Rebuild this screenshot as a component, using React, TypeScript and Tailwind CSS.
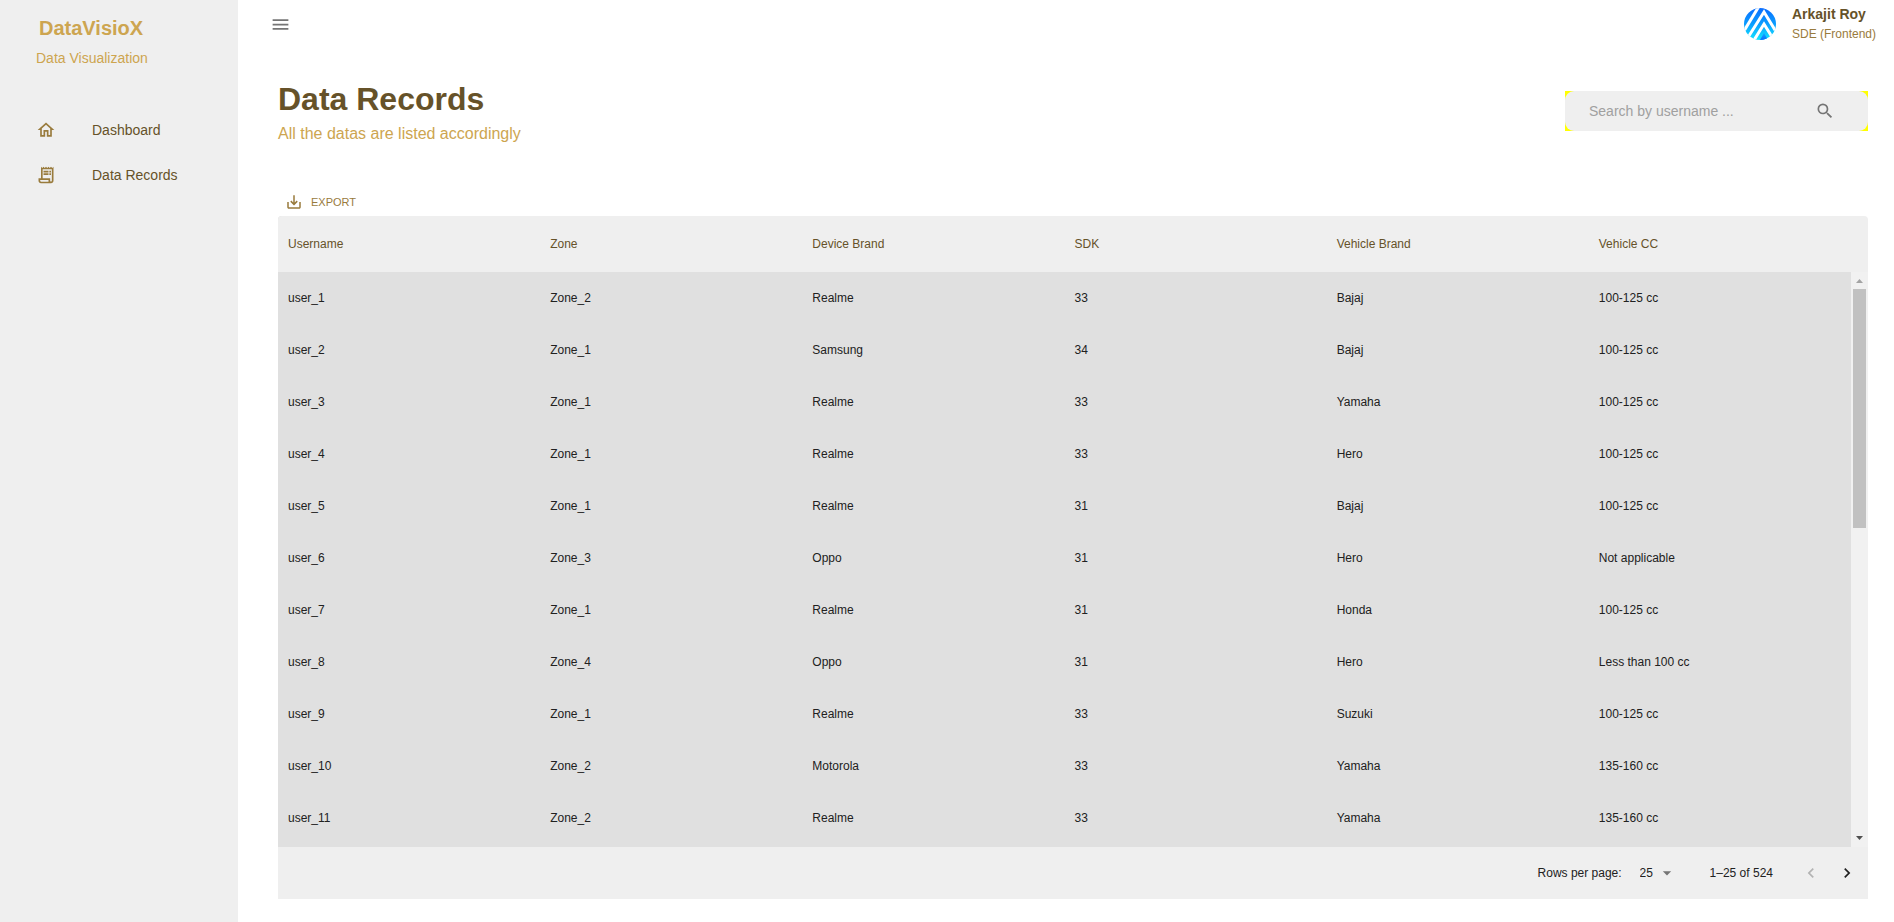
import { useState } from "react";
import {
  MdArrowDropDown,
  MdKeyboardArrowLeft,
  MdKeyboardArrowRight,
  MdMenu,
  MdOutlineHome,
  MdOutlineReceiptLong,
  MdSaveAlt,
  MdSearch,
} from "react-icons/md";

const columns = ["Username", "Zone", "Device Brand", "SDK", "Vehicle Brand", "Vehicle CC"];

const records = [
  ["user_1", "Zone_2", "Realme", "33", "Bajaj", "100-125 cc"],
  ["user_2", "Zone_1", "Samsung", "34", "Bajaj", "100-125 cc"],
  ["user_3", "Zone_1", "Realme", "33", "Yamaha", "100-125 cc"],
  ["user_4", "Zone_1", "Realme", "33", "Hero", "100-125 cc"],
  ["user_5", "Zone_1", "Realme", "31", "Bajaj", "100-125 cc"],
  ["user_6", "Zone_3", "Oppo", "31", "Hero", "Not applicable"],
  ["user_7", "Zone_1", "Realme", "31", "Honda", "100-125 cc"],
  ["user_8", "Zone_4", "Oppo", "31", "Hero", "Less than 100 cc"],
  ["user_9", "Zone_1", "Realme", "33", "Suzuki", "100-125 cc"],
  ["user_10", "Zone_2", "Motorola", "33", "Yamaha", "135-160 cc"],
  ["user_11", "Zone_2", "Realme", "33", "Yamaha", "135-160 cc"],
];

function Sidebar() {
  return (
    <aside className="w-[238px] shrink-0 bg-[#efefef]">
      <div className="pt-3 pl-9">
        <p className="pl-[3px] text-xl leading-8 font-bold text-[#cda550]">DataVisioX</p>
        <p className="mt-1 text-sm leading-5 text-[#cda550]">Data Visualization</p>
      </div>
      <nav className="mt-[39px] flex flex-col text-sm text-[#665229]">
        <a href="#dashboard" className="flex h-[45px] items-center gap-9 pl-9">
          <MdOutlineHome className="size-5 text-[#997b3d]" />
          <span>Dashboard</span>
        </a>
        <a href="#records" className="flex h-[45px] items-center gap-9 pl-9">
          <MdOutlineReceiptLong className="size-5 text-[#997b3d]" />
          <span>Data Records</span>
        </a>
      </nav>
    </aside>
  );
}

function Logo() {
  return (
    <svg viewBox="0 0 32 32" className="size-8" aria-hidden="true">
      <defs>
        <linearGradient id="logoFill" x1="0" y1="0" x2="0" y2="1">
          <stop offset="0" stopColor="#0a6cff" />
          <stop offset="0.5" stopColor="#0a9dff" />
          <stop offset="1" stopColor="#12e6ff" />
        </linearGradient>
        <linearGradient id="logoCore" x1="0" y1="0" x2="0" y2="1">
          <stop offset="0" stopColor="#12a8ff" />
          <stop offset="1" stopColor="#0a6cff" />
        </linearGradient>
        <clipPath id="logoClip">
          <circle cx="16" cy="16" r="16" />
        </clipPath>
      </defs>
      <g clipPath="url(#logoClip)">
        <rect width="32" height="32" fill="url(#logoFill)" />
        <g fill="none" stroke="#fff" strokeWidth="3">
          <path d="M0 23 14.500 -1" />
          <path d="M3 31 20 4 34 27" />
          <path d="M9.500 33 20 16 30.500 33" />
        </g>
        <path d="M16 32 20 25 24 32z" fill="url(#logoCore)" />
      </g>
    </svg>
  );
}

function TopBar() {
  return (
    <header className="flex h-12 items-center justify-between pr-[18px] pl-8">
      <button type="button" aria-label="Toggle menu" className="text-[#757575]">
        <MdMenu className="size-[21px]" />
      </button>
      <div className="flex items-center gap-4">
        <Logo />
        <div>
          <p className="text-sm leading-5 font-bold text-[#665229]">Arkajit Roy</p>
          <p className="text-xs leading-5 text-[#997b3d]">SDE (Frontend)</p>
        </div>
      </div>
    </header>
  );
}

function SearchBox() {
  return (
    <div className="bg-[#ffff00]">
      <form className="flex h-10 w-[303px] items-center rounded-[9px] bg-[#efefef] pr-[33px]" onSubmit={(e) => e.preventDefault()}>
        <input
          type="text"
          aria-label="Search by username"
          placeholder="Search by username ..."
          className="min-w-0 flex-1 bg-transparent pl-6 text-sm text-[#333333] outline-none placeholder:text-[#a0a0a0]"
        />
        <button type="submit" aria-label="Search" className="text-[#757575]">
          <MdSearch className="size-5" />
        </button>
      </form>
    </div>
  );
}

function ScrollTrack() {
  return (
    <div className="flex w-[17px] shrink-0 flex-col pt-14" aria-hidden="true">
      <div className="flex flex-1 flex-col items-center bg-[#f1f1f1]">
        <svg viewBox="0 0 17 17" className="size-[17px]">
          <path d="M5 11h7L8.500 7z" fill="#a3a3a3" />
        </svg>
        <div className="h-[239px] w-[13px] bg-[#c1c1c1]" />
        <svg viewBox="0 0 17 17" className="mt-auto size-[17px]">
          <path d="M5 6h7L8.500 10z" fill="#505050" />
        </svg>
      </div>
    </div>
  );
}

function RecordsTable() {
  return (
    <div className="flex overflow-hidden rounded-t bg-[#efefef]">
      <div className="min-w-0 flex-1 bg-[#e0e0e0] pb-[3px]">
        <table className="w-full table-fixed text-left text-xs">
          <thead className="bg-[#efefef] text-[#665229]">
            <tr className="h-14">
              {columns.map((name) => (
                <th key={name} scope="col" className="px-[10px] font-normal">
                  {name}
                </th>
              ))}
            </tr>
          </thead>
          <tbody className="text-[#212121]">
            {records.map((row) => (
              <tr key={row[0]} className="h-[52px]">
                {row.map((cell, i) => (
                  <td key={columns[i]} className="px-[10px]">
                    {cell}
                  </td>
                ))}
              </tr>
            ))}
          </tbody>
        </table>
      </div>
      <ScrollTrack />
    </div>
  );
}

function Pagination() {
  const [pageSize, setPageSize] = useState("25");
  return (
    <div className="flex h-[52px] items-center justify-end bg-[#efefef] pr-[11px] text-xs text-[#212121]">
      <label htmlFor="page-size">Rows per page:</label>
      <div className="relative ml-[18px] flex items-center">
        <select
          id="page-size"
          value={pageSize}
          onChange={(e) => setPageSize(e.target.value)}
          className="w-9 appearance-none bg-transparent outline-none"
        >
          <option>25</option>
          <option>50</option>
          <option>100</option>
        </select>
        <MdArrowDropDown className="pointer-events-none absolute -right-px size-5 text-[#757575]" />
      </div>
      <span className="ml-[34px]">1–25 of 524</span>
      <div className="ml-7 flex gap-4">
        <button type="button" aria-label="Previous page" disabled className="text-[#b3b3b3]">
          <MdKeyboardArrowLeft className="size-5" />
        </button>
        <button type="button" aria-label="Next page" className="text-[#212121]">
          <MdKeyboardArrowRight className="size-5" />
        </button>
      </div>
    </div>
  );
}

export default function App() {
  return (
    <div className="flex min-h-screen bg-white font-['Liberation_Sans',Arial,sans-serif]">
      <Sidebar />
      <main className="min-w-0 flex-1">
        <TopBar />
        <div className="pt-7 pr-[26px] pb-6 pl-10">
          <div className="flex items-center justify-between">
            <div>
              <h1 className="text-[32px] leading-[46px] font-bold text-[#665229]">Data Records</h1>
              <p className="text-base leading-6 text-[#cda550]">All the datas are listed accordingly</p>
            </div>
            <SearchBox />
          </div>
          <div className="mt-11 flex h-[26px] items-start">
            <button type="button" className="flex items-center gap-2 py-[3px] pl-[7px] text-[11px] text-[#997b3d]">
              <MdSaveAlt className="size-[18px]" />
              EXPORT
            </button>
          </div>
          <RecordsTable />
          <Pagination />
        </div>
      </main>
    </div>
  );
}
